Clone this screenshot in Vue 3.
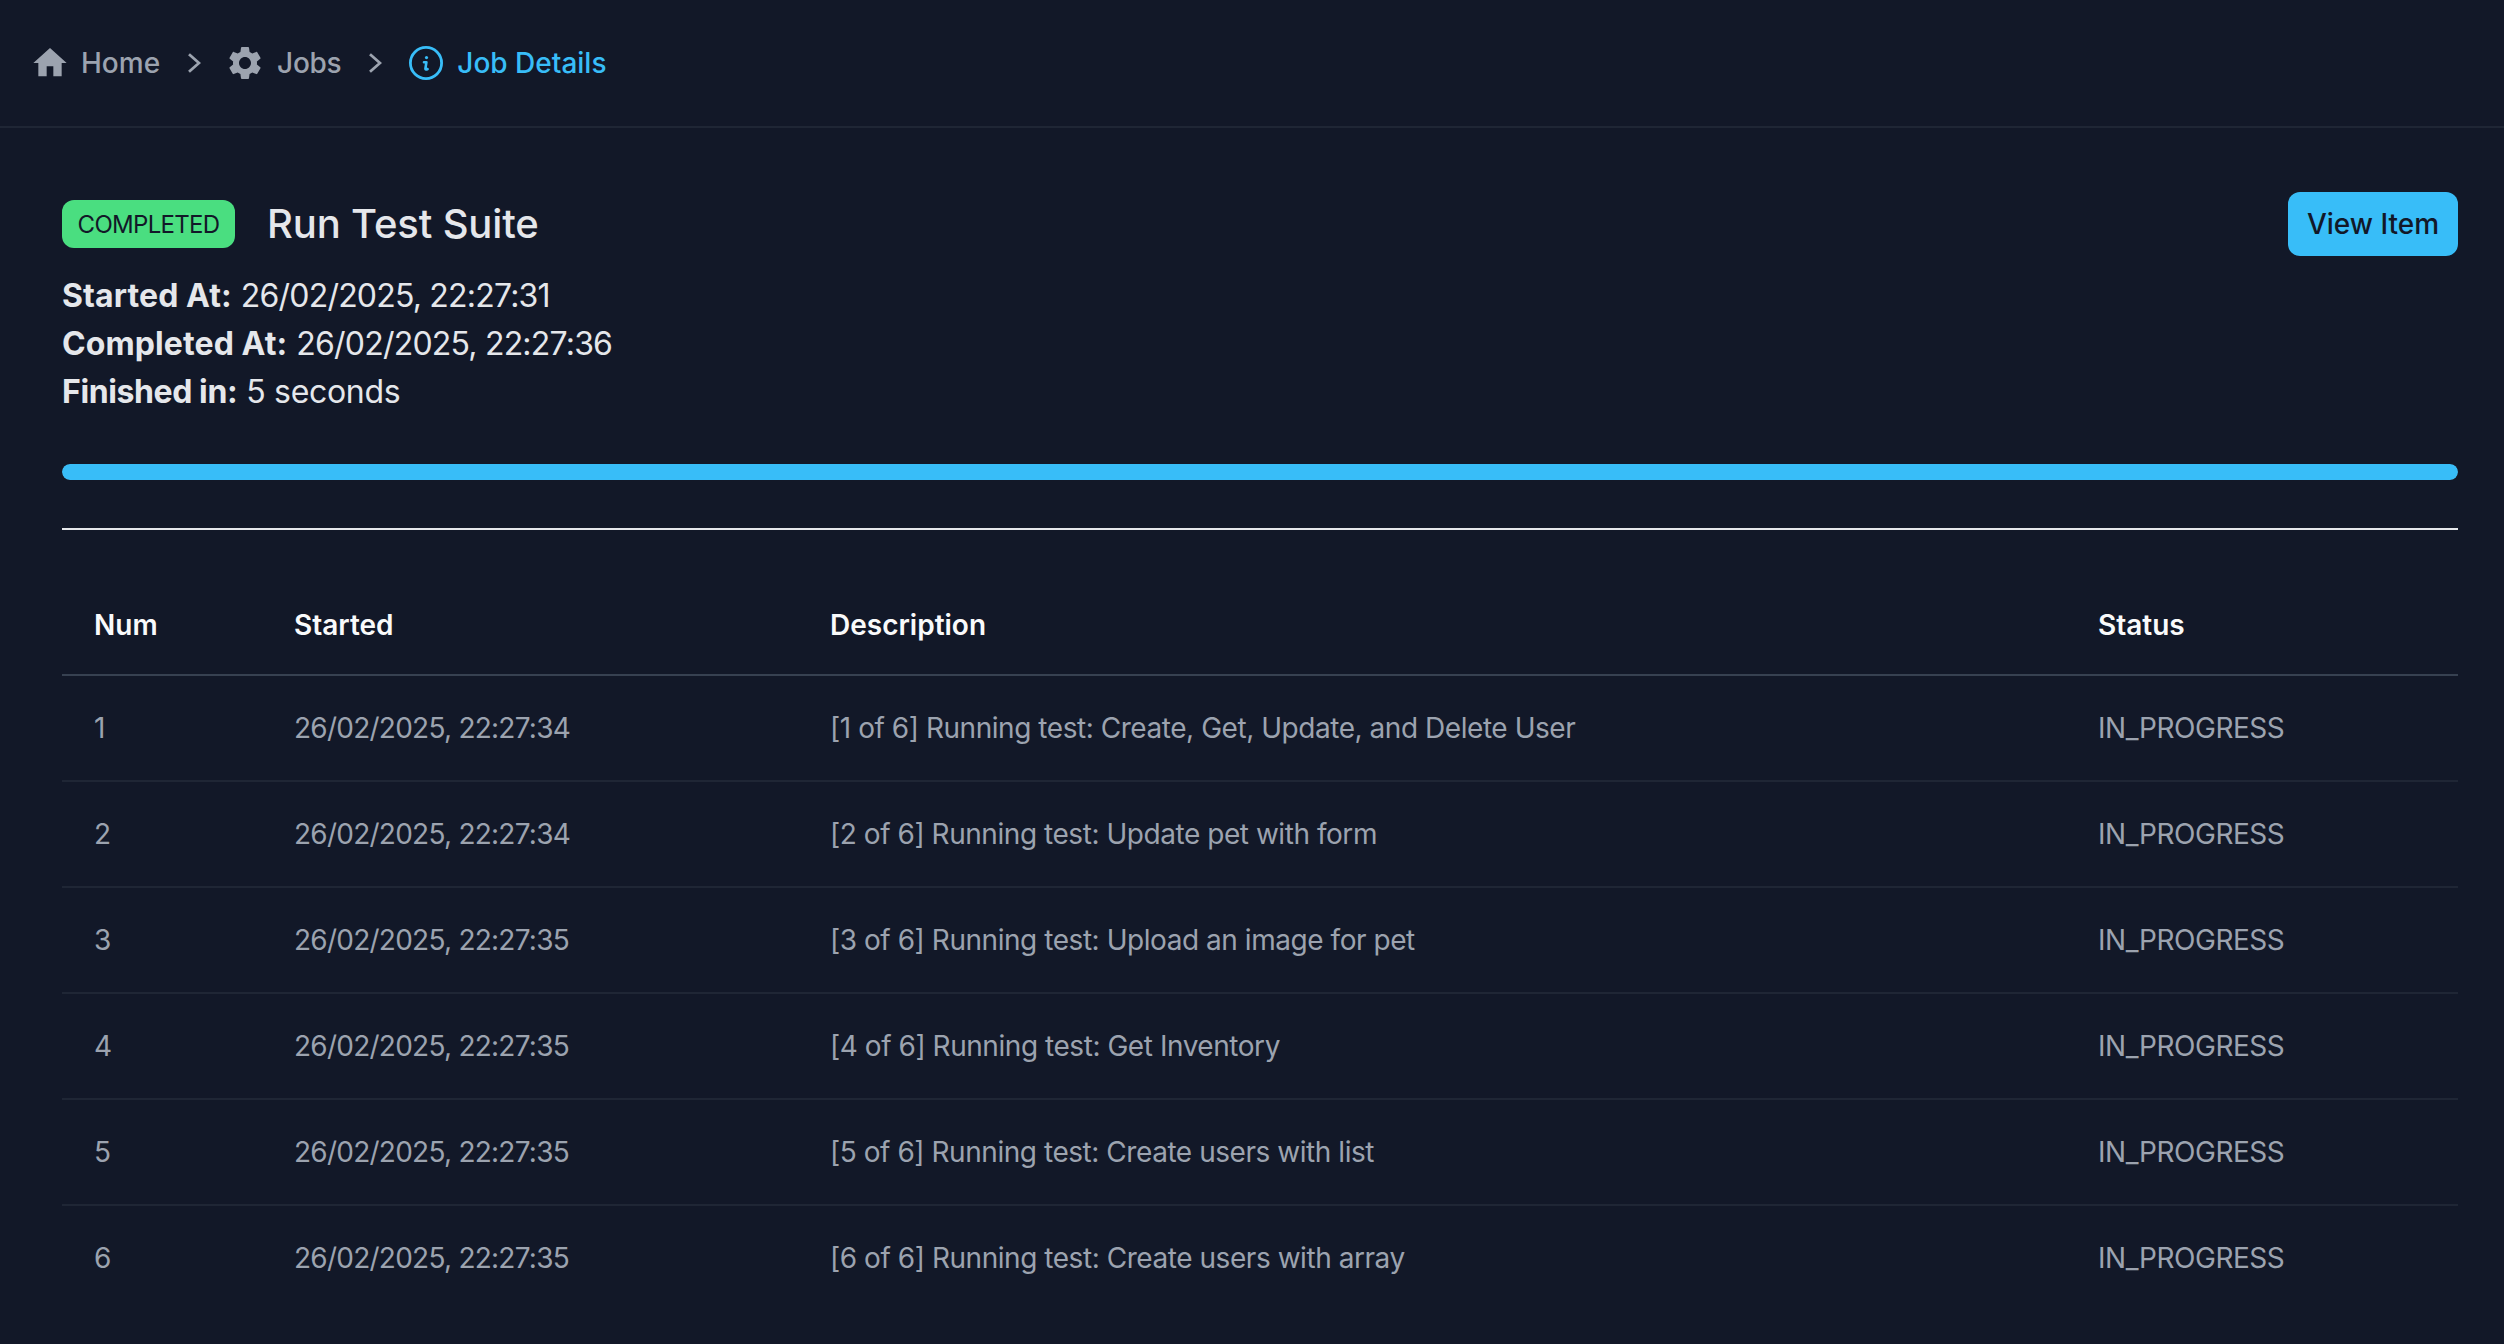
<template>
  <div class="page">
    <nav class="crumbs">
      <a class="crumb">
        <svg class="icon" viewBox="0 0 24 24" fill="currentColor"><path d="M10 20v-6h4v6h5v-8h3L12 3 2 12h3v8z" /></svg>
        <span>Home</span>
      </a>
      <svg class="chev" viewBox="0 0 14 24" fill="none" stroke="currentColor" stroke-width="2.8"><path d="M2 3.2l10 8.8-10 8.8" /></svg>
      <a class="crumb">
        <svg class="icon" viewBox="0 0 24 24" fill="currentColor"><path d="M19.14 12.94c.04-.3.06-.61.06-.94 0-.32-.02-.64-.07-.94l2.03-1.58c.18-.14.23-.41.12-.61l-1.92-3.32c-.12-.22-.37-.29-.59-.22l-2.39.96c-.5-.38-1.03-.7-1.62-.94l-.36-2.54c-.04-.24-.24-.41-.48-.41h-3.84c-.24 0-.43.17-.47.41l-.36 2.54c-.59.24-1.13.57-1.62.94l-2.39-.96c-.22-.08-.47 0-.59.22L2.74 8.87c-.12.21-.08.47.12.61l2.03 1.58c-.05.3-.09.63-.09.94s.02.64.07.94l-2.03 1.58c-.18.14-.23.41-.12.61l1.92 3.32c.12.22.37.29.59.22l2.39-.96c.5.38 1.03.7 1.62.94l.36 2.54c.05.24.24.41.48.41h3.84c.24 0 .44-.17.47-.41l.36-2.54c.59-.24 1.13-.56 1.62-.94l2.39.96c.22.08.47 0 .59-.22l1.92-3.32c.12-.22.07-.47-.12-.61l-2.01-1.58zM12 15.6c-1.98 0-3.6-1.62-3.6-3.6s1.62-3.6 3.6-3.6 3.6 1.62 3.6 3.6-1.62 3.6-3.6 3.6z" /></svg>
        <span class="jobs">Jobs</span>
      </a>
      <svg class="chev" viewBox="0 0 14 24" fill="none" stroke="currentColor" stroke-width="2.8"><path d="M2 3.2l10 8.8-10 8.8" /></svg>
      <a class="crumb active">
        <svg class="icon" viewBox="0 0 40 40" fill="none" stroke="currentColor" stroke-width="2.8">
          <circle cx="20" cy="20" r="15.6" />
          <path d="M18 19.2h2.4l-1 6.4c-.1 1 .7 1.2 2.2.4" stroke-width="2.6" stroke-linecap="round" stroke-linejoin="round" />
          <circle cx="20.5" cy="14.6" r="1.6" fill="currentColor" stroke="none" />
        </svg>
        <span>Job Details</span>
      </a>
    </nav>

    <main class="content">
      <div class="head">
        <div class="title-row">
          <span class="badge">COMPLETED</span>
          <h1>Run Test Suite</h1>
        </div>
        <button class="view-btn">View Item</button>
      </div>

      <div class="meta">
        <p><b>Started At:</b> <span class="stamp">26/02/2025, 22:27:31</span></p>
        <p><b>Completed At:</b> <span class="stamp">26/02/2025, 22:27:36</span></p>
        <p><b class="tight">Finished in:</b> <span class="words">5 seconds</span></p>
      </div>

      <div class="progress"><div class="bar" :style="{ width: progress + '%' }"></div></div>
      <hr class="divider" />

      <table class="steps">
        <colgroup>
          <col style="width: 200px" />
          <col style="width: 536px" />
          <col style="width: 1268px" />
          <col style="width: 392px" />
        </colgroup>
        <thead>
          <tr>
            <th>Num</th>
            <th>Started</th>
            <th>Description</th>
            <th>Status</th>
          </tr>
        </thead>
        <tbody>
          <tr v-for="row in rows" :key="row.num">
            <td>{{ row.num }}</td>
            <td class="date">{{ row.started }}</td>
            <td>{{ row.text }}</td>
            <td>IN_PROGRESS</td>
          </tr>
        </tbody>
      </table>
    </main>
  </div>
</template>

<script setup>
const progress = 100;

const rows = [
  { num: 1, started: "26/02/2025, 22:27:34", text: "[1 of 6] Running test: Create, Get, Update, and Delete User" },
  { num: 2, started: "26/02/2025, 22:27:34", text: "[2 of 6] Running test: Update pet with form" },
  { num: 3, started: "26/02/2025, 22:27:35", text: "[3 of 6] Running test: Upload an image for pet" },
  { num: 4, started: "26/02/2025, 22:27:35", text: "[4 of 6] Running test: Get Inventory" },
  { num: 5, started: "26/02/2025, 22:27:35", text: "[5 of 6] Running test: Create users with list" },
  { num: 6, started: "26/02/2025, 22:27:35", text: "[6 of 6] Running test: Create users with array" },
];
</script>

<style>
html,
body {
  margin: 0;
  background: #121828;
}
</style>

<style scoped>
.page {
  min-height: 1344px;
  background: #121828;
  color: #e5e7eb;
  font-family: "Inter", "Liberation Sans", sans-serif;
}
.crumbs {
  height: 126px;
  border-bottom: 2px solid #1f2635;
  padding-left: 30px;
  display: flex;
  align-items: center;
  font-size: 28px;
  font-weight: 500;
  color: #9ca3af;
}
.crumb {
  display: flex;
  align-items: center;
  gap: 11px;
}
.crumb.active {
  color: #38bdf8;
}
.jobs {
  margin-left: 1px;
  letter-spacing: -0.3px;
}
.icon {
  width: 40px;
  height: 40px;
}
.chev {
  width: 14px;
  height: 24px;
  margin: 0 24px 0 27px;
  color: #9ca3af;
}
.content {
  padding: 64px 46px 0 62px;
}
.head {
  display: flex;
  justify-content: space-between;
  align-items: center;
}
.title-row {
  display: flex;
  align-items: center;
  gap: 32px;
}
.badge {
  width: 173px;
  height: 48px;
  display: flex;
  align-items: center;
  justify-content: center;
  background: #4ade80;
  color: #121828;
  border-radius: 12px;
  font-size: 24px;
  letter-spacing: -0.7px;
}
h1 {
  margin: 0;
  font-size: 40px;
  font-weight: 500;
  line-height: 60px;
  letter-spacing: -0.15px;
}
.view-btn {
  width: 170px;
  height: 64px;
  padding: 0;
  border: none;
  border-radius: 12px;
  background: #38bdf8;
  color: #121828;
  font: 500 28px "Inter", "Liberation Sans", sans-serif;
}
.meta {
  margin-top: 16px;
  font-size: 32px;
  line-height: 48px;
}
.meta p {
  margin: 0;
}
.meta b {
  font-weight: 700;
  letter-spacing: 0.1px;
}
.meta b.tight {
  letter-spacing: -0.4px;
}
.stamp {
  letter-spacing: -0.8px;
}
.words {
  letter-spacing: -0.3px;
}
.progress {
  margin-top: 48px;
  height: 16px;
  border-radius: 8px;
  background: #374151;
  overflow: hidden;
}
.bar {
  height: 100%;
  background: #38bdf8;
  border-radius: 8px;
}
.divider {
  margin: 48px 0 0;
  border: none;
  border-top: 2px solid #e5e7eb;
}
.steps {
  margin-top: 45px;
  width: 2396px;
  table-layout: fixed;
  border-collapse: collapse;
  font-size: 28px;
}
th,
td {
  padding: 0 32px;
  text-align: left;
}
th {
  height: 99px;
  font-weight: 600;
  color: #f9fafb;
  border-bottom: 2px solid #374151;
}
td {
  height: 104px;
  color: #9ca3af;
  border-bottom: 2px solid #1f2635;
  letter-spacing: -0.45px;
}
td.date {
  letter-spacing: -0.75px;
}
tbody tr:last-child td {
  border-bottom: none;
}
</style>
